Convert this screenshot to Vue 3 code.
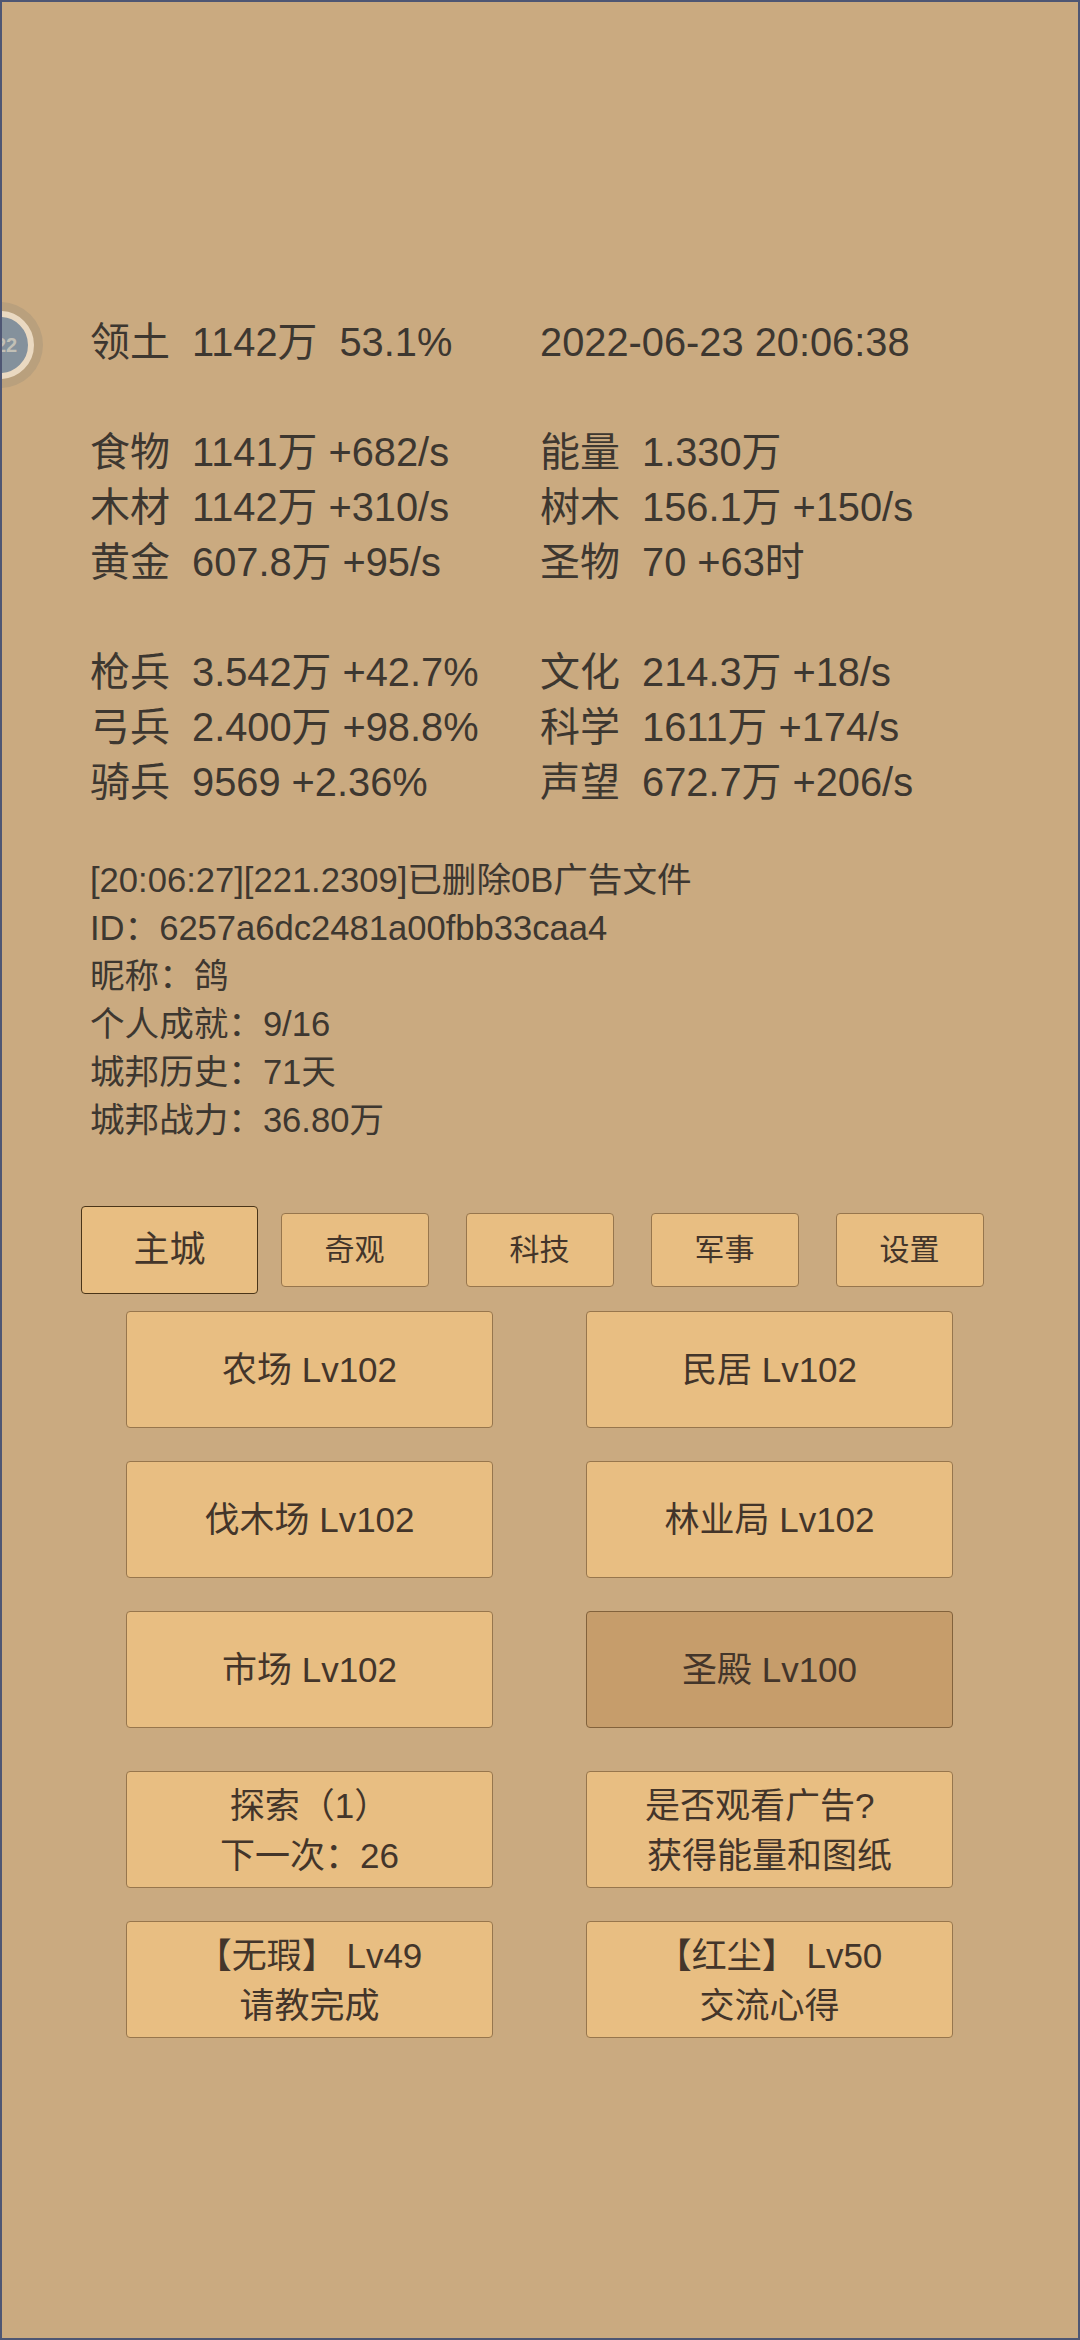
<template>
  <div class="page">
    <!-- floating ball -->
    <div class="ball"><div class="ball-inner"><span class="ball-text">22</span></div></div>

    <div class="stats">
      <div class="cell"><span class="label">领土</span><span>{{ territory }}</span></div>
      <div class="cell">2022-06-23 20:06:38</div>
    </div>

    <div class="stats group" v-for="(group, i) in statGroups" :key="i">
      <div class="cell" v-for="row in group" :key="row[0]">
        <span class="label">{{ row[0] }}</span><span>{{ row[1] }}</span>
      </div>
    </div>

    <div class="log">
      <div v-for="line in logLines" :key="line">{{ line }}</div>
    </div>

    <div class="tabs">
      <div class="tab-cell" v-for="(tab, i) in tabs" :key="tab">
        <button class="btn tab" :class="{ active: i === 0 }">{{ tab }}</button>
      </div>
    </div>

    <div class="buildings">
      <button
        v-for="b in buildings"
        :key="b.name"
        class="btn big"
        :class="{ dark: b.dark }"
      >{{ b.name }}</button>
    </div>

    <div class="actions">
      <button v-for="a in actions" :key="a[0]" class="btn big two-line">
        <span>{{ a[0] }}</span><span>{{ a[1] }}</span>
      </button>
    </div>
  </div>
</template>

<script setup>
const territory = '1142万  53.1%'

const statGroups = [
  [
    ['食物', '1141万 +682/s'],
    ['能量', '1.330万'],
    ['木材', '1142万 +310/s'],
    ['树木', '156.1万 +150/s'],
    ['黄金', '607.8万 +95/s'],
    ['圣物', '70 +63时']
  ],
  [
    ['枪兵', '3.542万 +42.7%'],
    ['文化', '214.3万 +18/s'],
    ['弓兵', '2.400万 +98.8%'],
    ['科学', '1611万 +174/s'],
    ['骑兵', '9569 +2.36%'],
    ['声望', '672.7万 +206/s']
  ]
]

const logLines = [
  '[20:06:27][221.2309]已删除0B广告文件',
  'ID：6257a6dc2481a00fbb33caa4',
  '昵称：鸽',
  '个人成就：9/16',
  '城邦历史：71天',
  '城邦战力：36.80万'
]

const tabs = ['主城', '奇观', '科技', '军事', '设置']

const buildings = [
  { name: '农场 Lv102' },
  { name: '民居 Lv102' },
  { name: '伐木场 Lv102' },
  { name: '林业局 Lv102' },
  { name: '市场 Lv102' },
  { name: '圣殿 Lv100', dark: true }
]

// 第一行末尾的空格是原文就有的，文字因此偏左
const actions = [
  ['探索（1）', '下一次：26'],
  ['是否观看广告?\u00a0\u00a0', '获得能量和图纸'],
  ['【无瑕】 Lv49', '请教完成'],
  ['【红尘】 Lv50', '交流心得']
]
</script>

<style scoped>
.page {
  position: relative;
  width: 1080px;
  height: 2340px;
  box-sizing: border-box;
  overflow: hidden;
  border: 2px solid #4e5673;
  padding: 313px 0 0 88px;
  background: #caaa80;
  color: #3d3730;
  font-family: "Liberation Sans", "Noto Sans CJK SC", sans-serif;
}

.ball {
  position: absolute;
  left: -45px;
  top: 300px;
  width: 86px;
  height: 86px;
  border-radius: 50%;
  background: #b9a07d;
  display: flex;
  align-items: center;
  justify-content: center;
}

.ball-inner {
  width: 68px;
  height: 68px;
  box-sizing: border-box;
  border-radius: 50%;
  border: 6.5px solid #ead9c1;
  background: #84919c;
  display: flex;
  align-items: center;
  justify-content: center;
}

.ball-text {
  margin-left: 12px;
  font-size: 20px;
  font-weight: 700;
  color: #c2c0b6;
}

.stats {
  display: grid;
  grid-template-columns: 450px 450px;
  font-size: 39.8px;
  line-height: 55px;
  white-space: pre;
}

.group {
  margin-top: 55px;
}

.label {
  display: inline-block;
  width: 102px;
  font-size: 40px;
}

.log {
  margin-top: 46px;
  font-size: 34.6px;
  line-height: 48px;
}

.tabs {
  display: flex;
  align-items: center;
  margin: 62px 0 0 -13px;
}

.tab-cell {
  width: 185px;
  display: flex;
  justify-content: center;
}

.btn {
  box-sizing: border-box;
  margin: 0;
  padding: 0;
  border: 1.5px solid #97764d;
  border-radius: 4px;
  background: #e8be82;
  color: #43352a;
  font-family: inherit;
  font-size: 35px;
  line-height: 40px;
}

.tab {
  width: 148px;
  height: 74px;
  font-size: 30px;
}

.tab.active {
  width: 177px;
  height: 88px;
  font-size: 36px;
  border-color: #4a3519;
}

.buildings,
.actions {
  display: grid;
  grid-template-columns: 367px 367px;
  column-gap: 93px;
  margin-left: 36px;
}

.buildings {
  row-gap: 33px;
  margin-top: 17px;
}

.actions {
  row-gap: 33px;
  margin-top: 43px;
}

.big {
  height: 117px;
}

.dark {
  background: #c69d6b;
  border-color: #82623c;
}

.two-line {
  display: flex;
  flex-direction: column;
  align-items: center;
  justify-content: center;
  padding-top: 2px;
  line-height: 49.5px;
}
</style>

<style>
body {
  background: #caaa80;
}
</style>
